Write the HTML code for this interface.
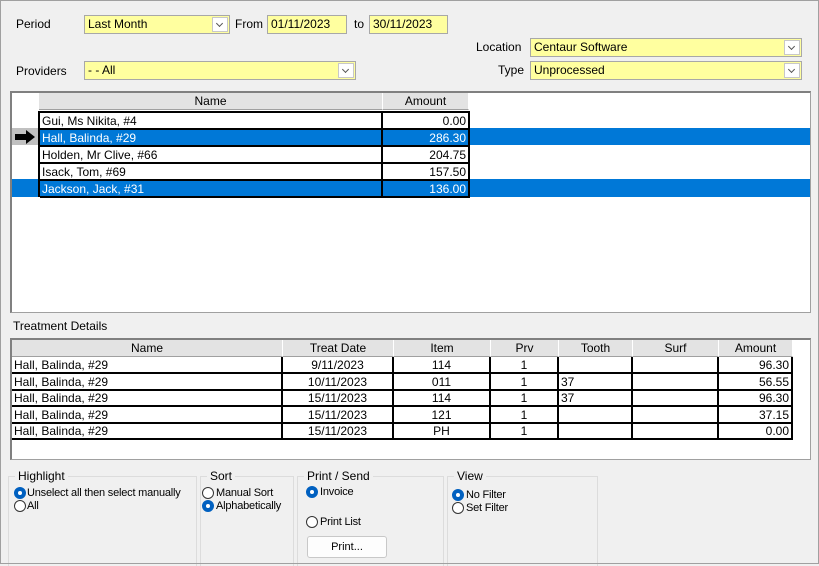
<!DOCTYPE html><html><head><style>
*{box-sizing:border-box;margin:0;padding:0}
body{width:819px;height:564px;background:#f0f0f0;font-family:"Liberation Sans",sans-serif;font-size:12px;color:#000;position:relative;overflow:hidden}
.fr{position:absolute;left:0;top:0;width:819px;height:564px;border:1px solid #a0a0a0;pointer-events:none}
.a{position:absolute;white-space:nowrap}
.y{position:absolute;background:#ffff9f;border:1px solid #a8a8a8;height:19px;padding:1px 3px;font-size:12px}
.dd{position:absolute;right:1px;top:1px;width:16px;height:15px;background:#fff;border:1px solid #c8c8c8}
.dd:after{content:"";position:absolute;left:4px;top:3px;width:4px;height:4px;border-right:1px solid #555;border-bottom:1px solid #555;transform:rotate(45deg)}
.c{position:absolute;height:17px;line-height:16px;padding:0 2px;overflow:hidden;white-space:nowrap}
.h{background:#e3e3e3;border-right:1px solid #fff;border-bottom:1px solid #a0a0a0;text-align:center}
.cl{border-right:2px solid #000;border-bottom:2px solid #000}
.sel{background:#0078d7;color:#fff}
.g{position:absolute;border:1px solid #dcdcdc;border-bottom:none}
.gl{position:absolute;top:-8px;left:6px;background:#f0f0f0;padding:0 3px;font-size:12px}
.r{position:absolute;width:12px;height:12px;border:1px solid #333;border-radius:50%;background:#fff}
.r.on{border-color:#0060c0;background:#0060c0}
.r.on:after{content:"";position:absolute;left:3px;top:3px;width:4px;height:4px;border-radius:50%;background:#fff}
.s{font-size:11px;letter-spacing:-0.2px}
</style></head><body>
<div class="a" style="left:16px;top:17px">Period</div>
<div class="y" style="left:84px;top:15px;width:146px">Last Month<div class="dd"></div></div>
<div class="a" style="left:235px;top:17px">From</div>
<div class="y" style="left:267px;top:15px;width:80px">01/11/2023</div>
<div class="a" style="left:354px;top:17px">to</div>
<div class="y" style="left:369px;top:15px;width:79px">30/11/2023</div>
<div class="a" style="left:476px;top:40px">Location</div>
<div class="y" style="left:530px;top:38px;width:272px">Centaur Software<div class="dd"></div></div>
<div class="a" style="left:498px;top:63px">Type</div>
<div class="y" style="left:530px;top:61px;width:272px">Unprocessed<div class="dd"></div></div>
<div class="a" style="left:16px;top:64px">Providers</div>
<div class="y" style="left:84px;top:61px;width:272px">- - All<div class="dd"></div></div>

<div class="a" style="left:10px;top:91px;width:801px;height:222px;background:#fff;border:1px solid #a0a0a0;border-top:2px solid #808080;border-left:2px solid #808080"></div>
<div class="c h" style="left:39px;top:93px;width:344px">Name</div>
<div class="c h" style="left:383px;top:93px;width:86px">Amount</div>
<div class="a sel" style="left:12px;top:128px;width:798px;height:17px"></div>
<div class="a sel" style="left:12px;top:179px;width:798px;height:18px"></div>
<div class="a" style="left:12px;top:128px;width:26px;height:17px;background:#c0c0c0"></div>
<svg class="a" style="left:14px;top:130px" width="22" height="14"><path d="M1 4h11V0l9 7-9 7V10H1z" fill="#000"/></svg>
<div class="a" style="left:38px;top:111px;width:432px;height:86px;border-left:2px solid #000;border-top:2px solid #000"></div>
<div class="c cl" style="left:40px;top:113px;width:343px">Gui, Ms Nikita, #4</div><div class="c cl" style="left:383px;top:113px;width:87px;text-align:right">0.00</div>
<div class="c cl sel" style="left:40px;top:130px;width:343px">Hall, Balinda, #29</div><div class="c cl sel" style="left:383px;top:130px;width:87px;text-align:right">286.30</div>
<div class="c cl" style="left:40px;top:147px;width:343px">Holden, Mr Clive, #66</div><div class="c cl" style="left:383px;top:147px;width:87px;text-align:right">204.75</div>
<div class="c cl" style="left:40px;top:164px;width:343px">Isack, Tom, #69</div><div class="c cl" style="left:383px;top:164px;width:87px;text-align:right">157.50</div>
<div class="c cl sel" style="left:40px;top:181px;width:343px">Jackson, Jack, #31</div><div class="c cl sel" style="left:383px;top:181px;width:87px;text-align:right">136.00</div>

<div class="a" style="left:13px;top:319px">Treatment Details</div>
<div class="a" style="left:10px;top:338px;width:801px;height:122px;background:#fff;border:1px solid #a0a0a0;border-top:2px solid #808080;border-left:2px solid #808080"></div>
<div class="c h" style="left:12px;top:340px;width:271px">Name</div>
<div class="c h" style="left:283px;top:340px;width:111px">Treat Date</div>
<div class="c h" style="left:394px;top:340px;width:97px">Item</div>
<div class="c h" style="left:491px;top:340px;width:68px">Prv</div>
<div class="c h" style="left:559px;top:340px;width:74px">Tooth</div>
<div class="c h" style="left:633px;top:340px;width:86px">Surf</div>
<div class="c h" style="left:719px;top:340px;width:74px">Amount</div>
<div id="t2"></div>
<script>
var d=[["9/11/2023","114","","96.30"],["10/11/2023","011","37","56.55"],["15/11/2023","114","37","96.30"],["15/11/2023","121","","37.15"],["15/11/2023","PH","","0.00"]];
var h="";d.forEach(function(r,i){var y=Math.round(357+i*16.5);
h+='<div class="c cl" style="left:12px;top:'+y+'px;width:271px">Hall, Balinda, #29</div>';
h+='<div class="c cl" style="left:283px;top:'+y+'px;width:111px;text-align:center">'+r[0]+'</div>';
h+='<div class="c cl" style="left:394px;top:'+y+'px;width:97px;text-align:center">'+r[1]+'</div>';
h+='<div class="c cl" style="left:491px;top:'+y+'px;width:68px;text-align:center">1</div>';
h+='<div class="c cl" style="left:559px;top:'+y+'px;width:74px">'+r[2]+'</div>';
h+='<div class="c cl" style="left:633px;top:'+y+'px;width:86px"></div>';
h+='<div class="c cl" style="left:719px;top:'+y+'px;width:74px;text-align:right">'+r[3]+'</div>';});
document.getElementById("t2").innerHTML=h;
</script>

<div class="g" style="left:8px;top:476px;width:189px;height:90px"><div class="gl">Highlight</div></div>
<div class="g" style="left:200px;top:476px;width:94px;height:90px"><div class="gl">Sort</div></div>
<div class="g" style="left:297px;top:476px;width:147px;height:90px"><div class="gl">Print / Send</div></div>
<div class="g" style="left:447px;top:476px;width:151px;height:90px"><div class="gl">View</div></div>
<div class="r on" style="left:14px;top:487px"></div><div class="a s" style="left:27px;top:487px">Unselect all then select manually</div>
<div class="r" style="left:14px;top:500px"></div><div class="a s" style="left:27px;top:500px">All</div>
<div class="r" style="left:202px;top:487px"></div><div class="a s" style="left:216px;top:487px">Manual Sort</div>
<div class="r on" style="left:202px;top:500px"></div><div class="a s" style="left:216px;top:500px">Alphabetically</div>
<div class="r on" style="left:306px;top:486px"></div><div class="a s" style="left:320px;top:486px">Invoice</div>
<div class="r" style="left:306px;top:516px"></div><div class="a s" style="left:320px;top:516px">Print List</div>
<div class="a" style="left:307px;top:536px;width:80px;height:22px;background:#fdfdfd;border:1px solid #c8c8c8;border-radius:3px;text-align:center;line-height:20px;font-size:11px">Print...</div>
<div class="r on" style="left:452px;top:489px"></div><div class="a s" style="left:466px;top:489px">No Filter</div>
<div class="r" style="left:452px;top:502px"></div><div class="a s" style="left:466px;top:502px">Set Filter</div>
<div class="fr"></div>
</body></html>
